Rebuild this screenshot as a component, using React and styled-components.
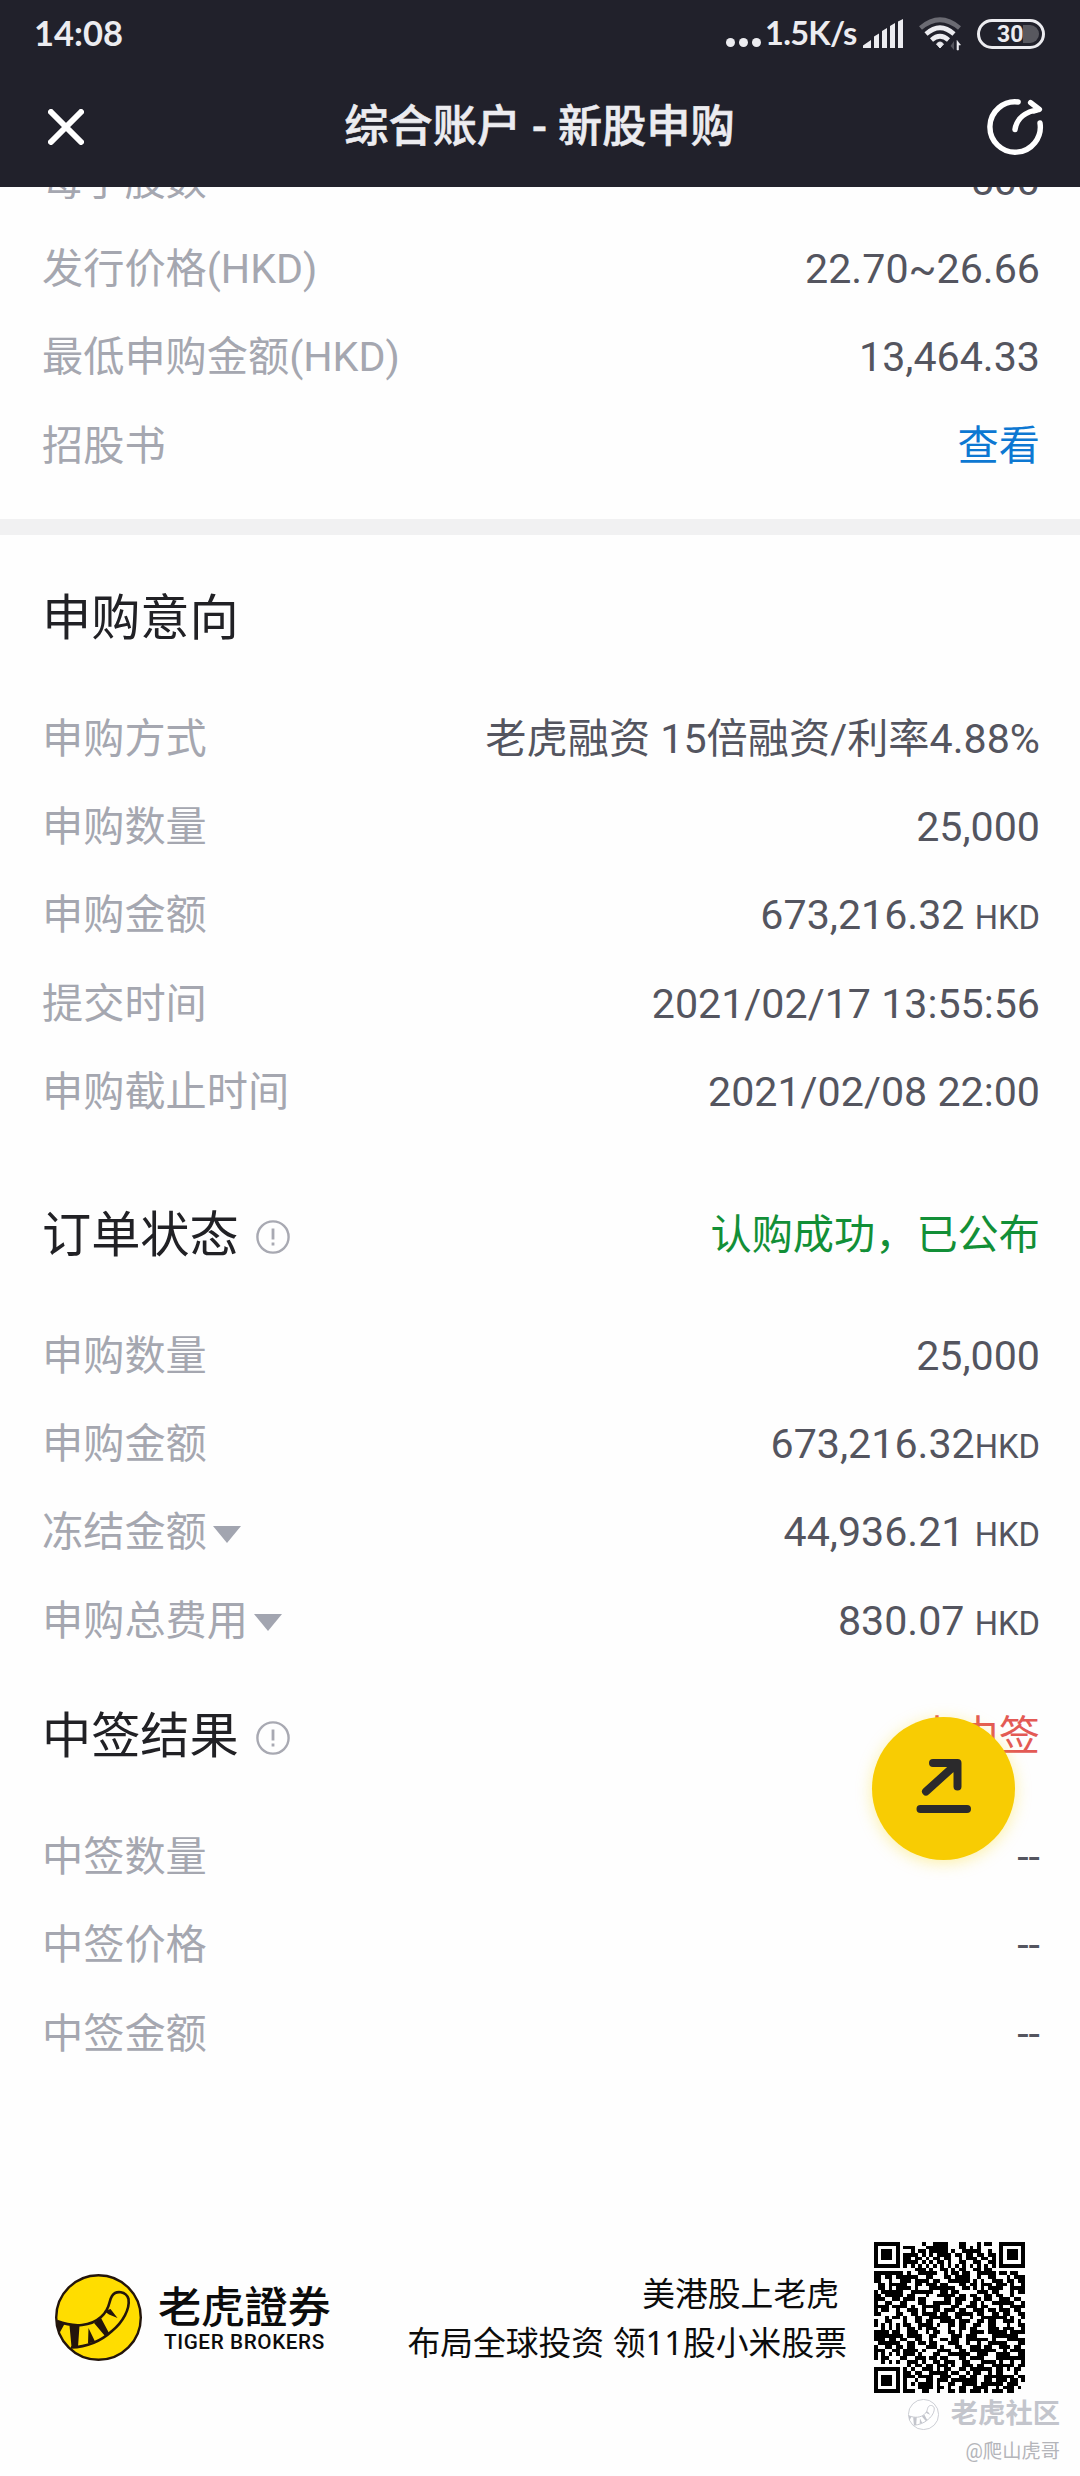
import styled, { createGlobalStyle } from "styled-components";

const priceRows = [
  { label: "每手股数", value: "500" },
  { label: "发行价格(HKD)", value: "22.70~26.66" },
  { label: "最低申购金额(HKD)", value: "13,464.33" },
  { label: "招股书", value: "查看", color: "#0d78d2" },
];

const intentRows = [
  { label: "申购方式", value: "老虎融资 15倍融资/利率4.88%" },
  { label: "申购数量", value: "25,000" },
  { label: "申购金额", value: "673,216.32 ", unit: "HKD" },
  { label: "提交时间", value: "2021/02/17 13:55:56" },
  { label: "申购截止时间", value: "2021/02/08 22:00" },
];

const orderRows = [
  { label: "申购数量", value: "25,000" },
  { label: "申购金额", value: "673,216.32", unit: "HKD" },
  { label: "冻结金额", value: "44,936.21 ", unit: "HKD", more: true },
  { label: "申购总费用", value: "830.07 ", unit: "HKD", more: true },
];

const resultRows = [
  { label: "中签数量", value: "--" },
  { label: "中签价格", value: "--" },
  { label: "中签金额", value: "--" },
];

// 41 x 41, # = dark
const qrRows = [
  "#######......#..####...##...#.##..#######",
  "#.....#.###...######...##.#.#.....#.....#",
  "#.###.#...#.##.#####.#..#####..#..#.###.#",
  "#.###.#.####.#.#.####.##.##.##.##.#.###.#",
  "#.###.#.##.##.#.##.##..#.###.##.#.#.###.#",
  "#.....#.####.#.#.##.#..##..##..##.#.....#",
  "#######.#.#.#.#.#.#.#.#.#.#.#.#.#.#######",
  "...........###.#..##.#.##..##.##.........",
  "########.#..#####..#.##.##..#####.##.##..",
  "##.##.######..##...##.####..#..##...#.###",
  "##..#..###.####.##..######.#.#..###.##.##",
  ".##.#####..##.###.##...##.##.###.###.#..#",
  ".##.#.####.#...#######..##.#.#.####..####",
  "#.######..######..##.##.....###.##...#.##",
  "##.#####.##...#..#####.##.##..##.##..#...",
  "###..##.###.##.....##.###..##.##..###.##.",
  "#..##..##...##..#####.##..##.#..######..#",
  "####.####.#..#####...##..###.##...#..####",
  "#.##..#..###.#..##.###.##..###.##.###.##.",
  "##....##..##.####.##..#####.##..##.##..##",
  "...#.##.#..##..######.##..#..#######.#..#",
  "#..##...#..##.##..####.###..##.##..###.#.",
  "#.#.#.#.##..####.#..##.##..##..##...#..##",
  "..#.#.#..##.#.###...#..##.##...###.###..#",
  "####.##..###..#.##..##.#..####.#####.####",
  "########.####..##....###.###....#######..",
  "###.##.##..##..#..##.##..######.#...#####",
  ".######..##.##.##...###..#..#..#####...##",
  "#..##.##.##...###.#...##..###.##..###.##.",
  "###..##.####.#...####..##.#######..#.####",
  "#.#.#.#.###.#...##..######..###..####..##",
  "#.##...##..###.##.##...##.####...########",
  "..#.#.#..###.#..##.###..##...####.#..#..#",
  ".........#.##.##.###.#..###.##..######.##",
  "#######.#.#..###.#.##..##.######.##.#.##.",
  "#.....#.##.##..#####.##..#.##..#.##...#..",
  "#.###.#.###.####..###..##.##..########.##",
  "#.###.#.#..#..##.###.#######..##.###.##.#",
  "#.###.#.#.#.####.#..##..####.######.###..",
  "#.....#.#...####.##.#..##..####..#.###.#.",
  "#######.###..##..#..##.##.###.#.###.##...",
];

const CloseIcon = () => (
  <svg width="36" height="36" viewBox="0 0 36 36">
    <path d="M3 3L33 33M33 3L3 33" stroke="#fff" strokeWidth="6" strokeLinecap="round" />
  </svg>
);

const ShareIcon = () => (
  <svg width="60" height="60" viewBox="0 0 60 60" fill="none" stroke="#fff" strokeWidth="5.4" strokeLinecap="round" strokeLinejoin="round">
    <path d="M33.2 5A25.2 25.2 0 1 0 55 26" />
    <path d="M30 32.5C31.5 22 40 14.5 54 12.6M45.6 5.6L54.4 12.4L49 14" />
  </svg>
);

const Signal = () => (
  <svg width="41" height="30" viewBox="0 0 41 30" fill="#ececf0">
    <path d="M0 29V26.5L8 21V29zM11 29V17.5L16 14.5V29zM19 29V12L24 9V29zM27 29V7L32 4V29zM35 29V2.5L40 0V29z" />
  </svg>
);

const Wifi = () => (
  <svg width="44" height="34" viewBox="0 0 44 34" fill="none" strokeWidth="4.6">
    <path d="M1.5 11Q21 -5.500 40.500 11" stroke="#6b6b73" />
    <path d="M7 17Q21 4.500 35 17" stroke="#ececf0" />
    <path d="M12.500 23Q21 15.500 29.500 23" stroke="#ececf0" />
    <path d="M17.500 27Q21 23 24.500 27L21 31z" fill="#ececf0" stroke="#ececf0" strokeWidth="1" />
    <path d="M35 24V33L31.500 29z" fill="#55555d" />
    <path d="M38 33V23.500L41.500 28H39.500V33z" fill="#ececf0" stroke="#ececf0" strokeWidth=".6" />
  </svg>
);

const InfoIcon = () => (
  <svg width="34" height="34" viewBox="0 0 34 34" fill="none" stroke="#a8a9b2">
    <circle cx="17" cy="17" r="15.600" strokeWidth="2.400" />
    <path d="M17 8.500V19.500M17 22.500V25.500" strokeWidth="2.800" />
  </svg>
);

const Triangle = () => (
  <svg width="28" height="17" viewBox="0 0 28 17">
    <path d="M0 0H28L14 17z" fill="#a2a5b0" />
  </svg>
);

const BackIcon = () => (
  <svg width="143" height="143" viewBox="0 0 143 143" fill="none" stroke="#2b2a2c" strokeWidth="8" strokeLinecap="round" strokeLinejoin="round">
    <path d="M61 46H85.500V69.500M85 46.500L54 74.500M48.500 92H95" />
  </svg>
);

const TigerLogo = ({ size, line = "#23150c", fill = "#ffdd00" }) => (
  <svg width={size} height={size} viewBox="0 0 87 87">
    <circle cx="43.500" cy="43.500" r="42.300" fill={fill} stroke={line} strokeWidth="2.400" />
    <path
      d="M2 47C20 54 36 52 46 43C56 34 53 28 57 22C61 16 71 17 73.500 25C75 35 68 48 57 57C45 68 30 73 16 73.500"
      fill="none"
      stroke={line}
      strokeWidth="2.600"
    />
    <path
      d="M2 47L9.500 50L4 60zM14.500 51.500H24.500L23 73H16.500zM33.500 54L40 67.500L33 69.500zM39 49L46 44L54 59L50 62zM49 37L55.500 35L62.500 44L54 40.500z"
      fill={line}
    />
  </svg>
);

const QrCode = () => (
  <svg width="151" height="151" viewBox="0 0 41 41" shapeRendering="crispEdges">
    {qrRows.map((row, y) =>
      row
        .split("")
        .map((cell, x) => cell === "#" && <rect key={`${x}-${y}`} x={x} y={y} width="1" height="1" />)
    )}
  </svg>
);

const InfoRows = ({ rows }) =>
  rows.map((row) => (
    <Row key={row.label}>
      <Label>
        {row.label}
        {row.more && <Triangle />}
      </Label>
      <Value $color={row.color}>
        {row.value}
        {row.unit && <Unit>{row.unit}</Unit>}
      </Value>
    </Row>
  ));

const App = () => {
  return (
    <Page>
      <GlobalStyle />
      <Header>
        <StatusBar>
          <Clock>14:08</Clock>
          <StatusRight>
            <Dots>
              <i />
              <i />
              <i />
            </Dots>
            <Speed>1.5K/s</Speed>
            <Signal />
            <WifiWrap>
              <Wifi />
            </WifiWrap>
            <Battery>
              <span>30</span>
            </Battery>
          </StatusRight>
        </StatusBar>
        <NavBar>
          <CloseIcon />
          <NavTitle>综合账户 - 新股申购</NavTitle>
          <ShareIcon />
        </NavBar>
      </Header>

      <ScrollArea>
        <PriceSection>
          <InfoRows rows={priceRows} />
        </PriceSection>
        <Divider />
        <Section $top={41}>
          <SectionHead>
            <SectionTitle>申购意向</SectionTitle>
          </SectionHead>
          <InfoRows rows={intentRows} />
        </Section>
        <Section $top={58.5}>
          <SectionHead>
            <SectionTitle>订单状态</SectionTitle>
            <InfoIcon />
            <Status $color="#128f37">认购成功，已公布</Status>
          </SectionHead>
          <InfoRows rows={orderRows} />
        </Section>
        <Section $top={31}>
          <SectionHead>
            <SectionTitle>中签结果</SectionTitle>
            <InfoIcon />
            <Status $color="#e35a55">未中签</Status>
            <FloatButton>
              <BackIcon />
            </FloatButton>
          </SectionHead>
          <InfoRows rows={resultRows} />
        </Section>
      </ScrollArea>

      <Footer>
        <TigerLogo size={87} />
        <Brand>
          <BrandName>老虎證券</BrandName>
          <BrandSub>TIGER BROKERS</BrandSub>
        </Brand>
        <Promo>
          <PromoLine $right={8}>美港股上老虎</PromoLine>
          <PromoLine $right={0}>布局全球投资 领11股小米股票</PromoLine>
        </Promo>
        <QrCode />
      </Footer>

      <Watermark>
        <Community>
          <TigerLogo size={31} line="#c3c5cc" fill="#fff" />
          <span>老虎社区</span>
        </Community>
        <Author>@爬山虎哥</Author>
      </Watermark>
    </Page>
  );
};

const GlobalStyle = createGlobalStyle`
  * {
    box-sizing: border-box;
  }

  body {
    margin: 0;
    background: #fefefe;
    font-family: Roboto, "Noto Sans CJK SC", sans-serif;
  }

  svg {
    display: block;
    flex-shrink: 0;
  }
`;

const Page = styled.div`
  position: relative;
  width: 1080px;
  height: 2476px;
  display: flex;
  flex-direction: column;
  overflow: hidden;
`;

const Header = styled.div`
  height: 187px;
  flex-shrink: 0;
  background: #21212b;
  color: #ececf0;
`;

const StatusBar = styled.div`
  height: 68px;
  padding: 0 35px 0 34px;
  display: flex;
  justify-content: space-between;
  align-items: center;
  font-family: Lato, sans-serif;
  font-weight: 700;
  line-height: 66px;
`;

const Clock = styled.div`
  padding-bottom: 2px;
  font-size: 34.5px;
`;

const StatusRight = styled.div`
  display: flex;
  align-items: center;
`;

const Dots = styled.div`
  display: flex;
  gap: 4px;
  margin: 17px 4px 0 0;

  & > i {
    width: 9px;
    height: 9px;
    border-radius: 50%;
    background: #ececf0;
  }
`;

const Speed = styled.div`
  width: 98px;
  padding-bottom: 2px;
  font-size: 32.5px;
  letter-spacing: -0.7px;
`;

const WifiWrap = styled.div`
  margin: 0 14px 0 15px;
`;

const Battery = styled.div`
  width: 68px;
  height: 30px;
  padding: 3px;
  border: 3px solid #ececf0;
  border-radius: 15px;

  & > span {
    display: block;
    height: 18px;
    padding-left: 14px;
    border-radius: 9px;
    background: linear-gradient(to right, transparent 40px, #58585f 40px);
    font-family: Roboto, sans-serif;
    font-size: 23px;
    line-height: 19px;
  }
`;

const NavBar = styled.div`
  height: 119px;
  padding: 0 35px 2px 48px;
  display: flex;
  justify-content: space-between;
  align-items: center;
`;

const NavTitle = styled.div`
  padding: 1px 0 0 22px;
  margin-right: -12px;
  transform: translateX(-12px);
  font-size: 44.2px;
  font-weight: 500;
  line-height: 60px;
  -webkit-text-stroke: 0.6px #ececf0;
`;

const ScrollArea = styled.div`
  height: 2055px;
  flex-shrink: 0;
  overflow: hidden;
`;

const PriceSection = styled.div`
  margin-top: -52px;
  padding: 0 40px 31px 42px;
`;

const Divider = styled.div`
  height: 16px;
  background: #f1f1f2;
`;

const Section = styled.div`
  padding: ${({ $top }) => $top}px 40px 0 42px;
`;

const SectionHead = styled.div`
  position: relative;
  height: 80px;
  margin-bottom: 37px;
  display: flex;
  align-items: center;

  & > svg {
    margin: 7px 0 0 17px;
  }
`;

const SectionTitle = styled.div`
  padding-top: 5px;
  font-size: 49.2px;
  line-height: 75px;
  color: #212125;
`;

const Status = styled.div`
  margin-left: auto;
  padding-top: 4px;
  font-size: 41.2px;
  line-height: 76px;
  color: ${({ $color }) => $color};
`;

const Row = styled.div`
  height: 88.3px;
  display: flex;
  justify-content: space-between;
  align-items: center;
  font-size: 41.2px;
  line-height: 60px;
  white-space: pre;
`;

const Label = styled.div`
  padding-top: 3px;
  display: flex;
  align-items: center;
  color: #a5a7b0;

  & > svg {
    margin: 4px 0 0 6px;
  }
`;

const Value = styled.div`
  padding-top: 3px;
  color: ${({ $color }) => $color || "#54555f"};
`;

const Unit = styled.span`
  font-size: 32.7px;
  line-height: 1;
`;

const FloatButton = styled.div`
  position: absolute;
  top: 23px;
  right: 25px;
  width: 143px;
  height: 143px;
  border-radius: 50%;
  background: #f8cc03;
  box-shadow: 0 3px 16px rgba(248, 214, 3, 0.35);

  & > svg {
    margin: 0;
  }
`;

const Footer = styled.div`
  height: 151px;
  padding: 0 55px;
  display: flex;
  align-items: center;
  color: #0c0c0c;
`;

const Brand = styled.div`
  margin-left: 16px;
`;

const BrandName = styled.div`
  font-family: "Noto Sans CJK TC", sans-serif;
  font-size: 43.2px;
  font-weight: 500;
  line-height: 49px;
`;

const BrandSub = styled.div`
  padding-left: 6px;
  font-size: 20.7px;
  font-weight: 500;
  line-height: 26px;
  letter-spacing: 0.6px;
`;

const Promo = styled.div`
  margin: 0 27px 0 auto;
  font-family: "Noto Sans", "Noto Sans CJK SC", sans-serif;
  font-size: 32.8px;
  line-height: 49px;
  text-align: right;
`;

const PromoLine = styled.div`
  padding-right: ${({ $right }) => $right}px;
`;

const Watermark = styled.div`
  padding: 4px 20px 0 0;
  display: flex;
  flex-direction: column;
  align-items: flex-end;
  color: #c3c5cc;
`;

const Community = styled.div`
  display: flex;
  align-items: center;
  gap: 12px;
  font-size: 27.3px;
  font-weight: 700;
  line-height: 34px;
`;

const Author = styled.div`
  padding-top: 1px;
  font-size: 19.3px;
  line-height: 39px;
  color: #b4b5ba;
`;

export default App;
